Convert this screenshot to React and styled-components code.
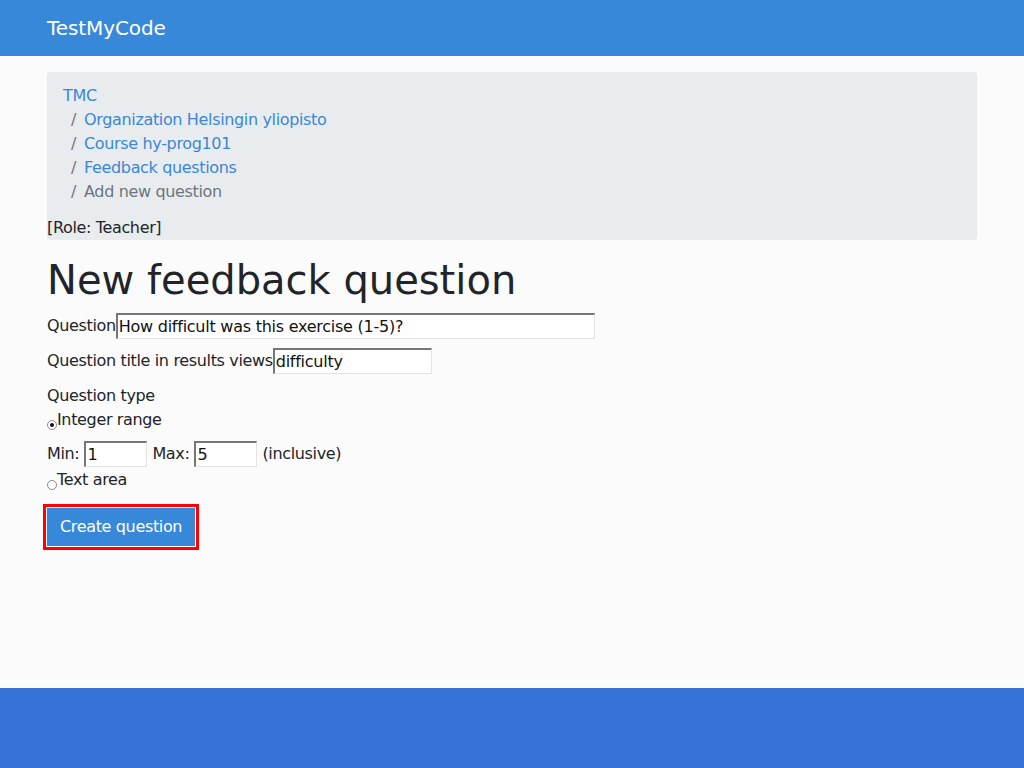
import React from "react";
import styled, { createGlobalStyle } from "styled-components";

const GlobalStyle = createGlobalStyle`
  html, body {
    margin: 0;
    padding: 0;
  }
  body {
    background: #fbfbfb;
    color: #212529;
    font-family: "DejaVu Sans", Verdana, sans-serif;
    font-size: 16px;
    line-height: 24px;
    letter-spacing: -0.35px;
  }
`;

const Page = styled.div`
  min-height: 100vh;
  display: flex;
  flex-direction: column;
`;

const Navbar = styled.header`
  height: 56px;
  background: #3788d8;
  display: flex;
  align-items: center;
`;

const Container = styled.div`
  width: 930px;
  margin: 0 auto;
`;

const Brand = styled.div`
  color: #fff;
  font-size: 20px;
  line-height: 30px;
  letter-spacing: -0.1px;
`;

const Main = styled.main`
  flex: 1;
  padding-top: 16px;
`;

const Crumbs = styled.nav`
  background: #e9ecef;
  border-radius: 4px;
`;

const CrumbList = styled.ol`
  list-style: none;
  margin: 0;
  padding: 12px 16px;
`;

const Crumb = styled.li`
  display: block;
  color: ${(p) => (p.$active ? "#6c757d" : "#3a87d6")};

  &:not(:first-child)::before {
    content: "/";
    color: #6c757d;
    padding: 0 8px;
  }
`;

const CrumbLink = styled.a`
  color: #3a87d6;
  text-decoration: none;
`;

const Role = styled.div`
  line-height: 24px;
`;

const Title = styled.h1`
  font-size: 40px;
  line-height: 48px;
  font-weight: 400;
  letter-spacing: 0;
  margin: 16px 0 9px;
`;

const Row = styled.div`
  display: flex;
  align-items: center;
  gap: ${(p) => p.$gap || 0}px;
  margin-bottom: ${(p) => (p.$mb === undefined ? 9 : p.$mb)}px;
`;

const Line = styled.div`
  line-height: 24px;
`;

const TextInput = styled.input`
  box-sizing: border-box;
  width: ${(p) => p.$w}px;
  height: 26px;
  padding: 1px;
  margin: 0;
  font-family: "DejaVu Sans", sans-serif;
  font-size: 16px;
  letter-spacing: -0.25px;
  color: #111;
  background: #fff;
  border-style: solid;
  border-width: 2px 1px 1px 2px;
  border-color: #767676 #e3e3e3 #e3e3e3 #767676;
  outline: none;
`;

const RadioLine = styled.label`
  display: flex;
  line-height: 24px;
  margin-bottom: ${(p) => p.$mb || 0}px;
`;

const Radio = styled.span`
  box-sizing: border-box;
  width: 10px;
  height: 10px;
  margin-top: 12px;
  border-radius: 50%;
  border: 1px solid #8a8a8a;
  background: #fff;
  position: relative;

  &::after {
    content: "";
    display: ${(p) => (p.$checked ? "block" : "none")};
    position: absolute;
    left: 2px;
    top: 2px;
    width: 4px;
    height: 4px;
    border-radius: 50%;
    background: #111;
  }
`;

const SubmitButton = styled.button`
  font-family: "DejaVu Sans", sans-serif;
  font-size: 16px;
  line-height: 24px;
  letter-spacing: -0.35px;
  color: #fff;
  background: #3788d8;
  border: 1px solid #3788d8;
  border-radius: 0;
  padding: 6px 12px;
  outline: 3px solid #ff0000;
  outline-offset: 1px;
  cursor: pointer;
`;

const Footer = styled.footer`
  height: 80px;
  background: #3574d6;
`;

export default function App() {
  return (
    <Page>
      <GlobalStyle />
      <Navbar>
        <Container>
          <Brand>TestMyCode</Brand>
        </Container>
      </Navbar>
      <Main>
        <Container>
          <Crumbs>
            <CrumbList>
              <Crumb><CrumbLink href="#">TMC</CrumbLink></Crumb>
              <Crumb><CrumbLink href="#">Organization Helsingin yliopisto</CrumbLink></Crumb>
              <Crumb><CrumbLink href="#">Course hy-prog101</CrumbLink></Crumb>
              <Crumb><CrumbLink href="#">Feedback questions</CrumbLink></Crumb>
              <Crumb $active>Add new question</Crumb>
            </CrumbList>
            <Role>[Role: Teacher]</Role>
          </Crumbs>

          <Title>New feedback question</Title>

          <form onSubmit={(e) => e.preventDefault()}>
            <Row>
              <span>Question</span>
              <TextInput $w={479} defaultValue="How difficult was this exercise (1-5)?" />
            </Row>
            <Row $mb={10}>
              <span>Question title in results views</span>
              <TextInput $w={159} defaultValue="difficulty" />
            </Row>
            <Line>Question type</Line>
            <RadioLine $mb={9}>
              <Radio $checked />
              <span>Integer range</span>
            </RadioLine>
            <Row $gap={5} $mb={1}>
              <span>Min:</span>
              <TextInput $w={63} defaultValue="1" />
              <span>Max:</span>
              <TextInput $w={63} defaultValue="5" />
              <span>(inclusive)</span>
            </Row>
            <RadioLine $mb={16}>
              <Radio />
              <span>Text area</span>
            </RadioLine>
            <SubmitButton type="submit">Create question</SubmitButton>
          </form>
        </Container>
      </Main>
      <Footer />
    </Page>
  );
}
